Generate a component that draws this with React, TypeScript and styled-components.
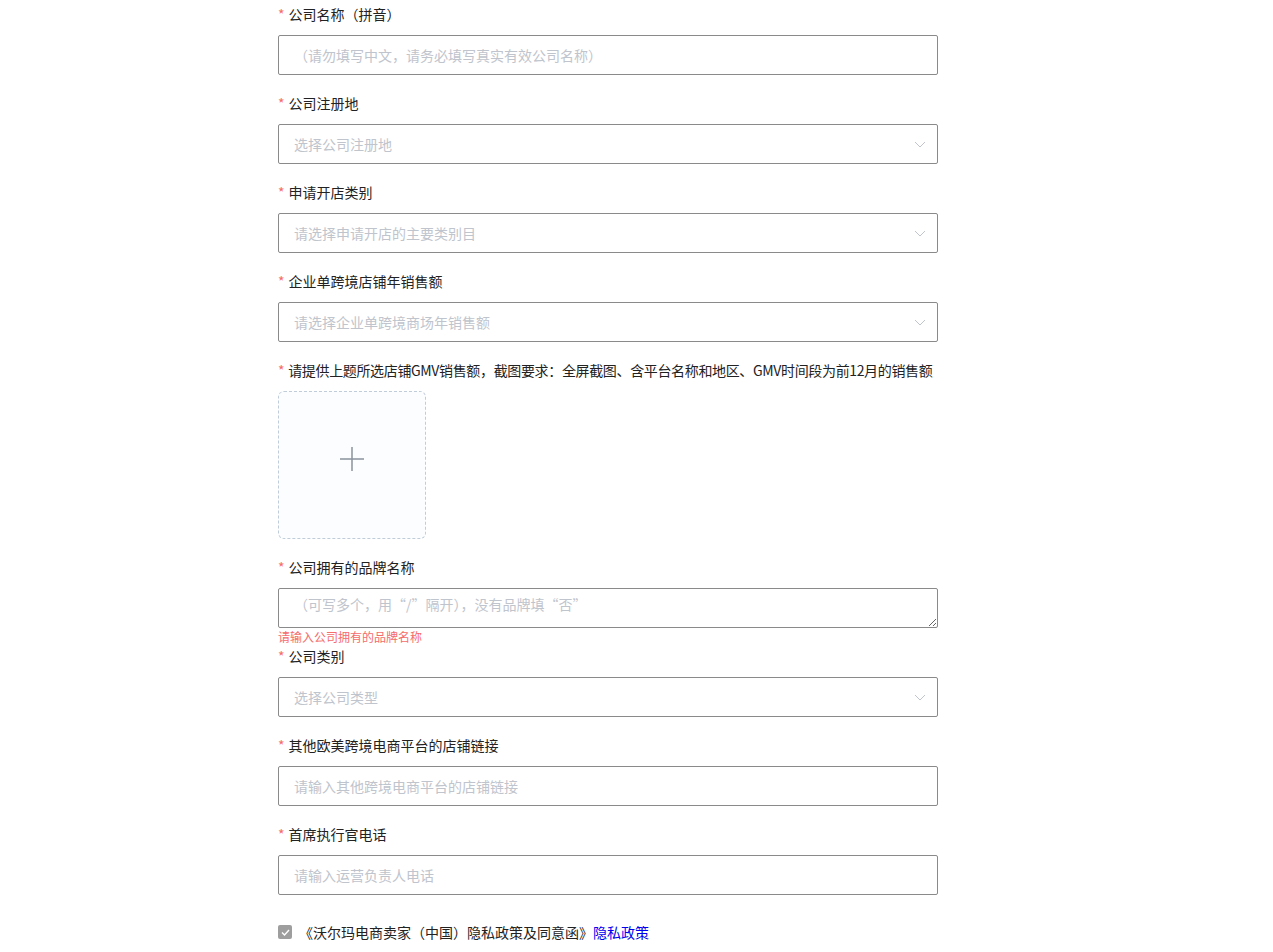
import styled, { createGlobalStyle } from "styled-components";
import { useLayoutEffect, useRef } from "react";

const GlobalStyle = createGlobalStyle`
  body {
    margin: 0;
    background: #fff;
    font-family: "Noto Sans CJK SC", "Noto Sans", sans-serif;
    color: #222;
  }
  * {
    box-sizing: border-box;
  }
`;

type Field = {
  label: string;
  placeholder: string;
  kind: "input" | "select" | "textarea" | "upload";
  error?: string;
};

// the part of the form above the scrolled-to position
const earlier: Field[] = [
  { label: "公司名称（中文）", placeholder: "请输入营业执照上的公司名称", kind: "input" },
  { label: "统一社会信用代码", placeholder: "请输入统一社会信用代码", kind: "input" },
  { label: "公司官网", placeholder: "请输入公司官网地址", kind: "input" },
  { label: "联系人姓名", placeholder: "请输入联系人姓名", kind: "input" },
  { label: "联系人职位", placeholder: "请输入联系人职位", kind: "input" },
  { label: "联系人手机号", placeholder: "请输入联系人手机号", kind: "input" },
  { label: "联系人邮箱", placeholder: "请输入联系人邮箱", kind: "input" },
  { label: "公司地址", placeholder: "请输入公司详细地址", kind: "input" },
  { label: "公司成立时间", placeholder: "请选择公司成立时间", kind: "select" },
  { label: "公司员工人数", placeholder: "请选择公司员工人数", kind: "select" },
  { label: "主营产品", placeholder: "请输入公司主营产品", kind: "input" },
  { label: "公司年销售总额", placeholder: "请选择公司年销售总额", kind: "select" },
  { label: "仓储物流方式", placeholder: "请选择仓储物流方式", kind: "select" },
];

const fields: Field[] = [
  { label: "公司名称（拼音）", placeholder: "（请勿填写中文，请务必填写真实有效公司名称）", kind: "input" },
  { label: "公司注册地", placeholder: "选择公司注册地", kind: "select" },
  { label: "申请开店类别", placeholder: "请选择申请开店的主要类别目", kind: "select" },
  { label: "企业单跨境店铺年销售额", placeholder: "请选择企业单跨境商场年销售额", kind: "select" },
  {
    label: "请提供上题所选店铺GMV销售额，截图要求：全屏截图、含平台名称和地区、GMV时间段为前12月的销售额",
    placeholder: "",
    kind: "upload",
  },
  {
    label: "公司拥有的品牌名称",
    placeholder: "（可写多个，用“/”隔开），没有品牌填“否”",
    kind: "textarea",
    error: "请输入公司拥有的品牌名称",
  },
  { label: "公司类别", placeholder: "选择公司类型", kind: "select" },
  { label: "其他欧美跨境电商平台的店铺链接", placeholder: "请输入其他跨境电商平台的店铺链接", kind: "input" },
  { label: "首席执行官电话", placeholder: "请输入运营负责人电话", kind: "input" },
];

const Chevron = () => (
  <svg width="12" height="7" viewBox="0 0 12 7" fill="none">
    <path d="M1 1l5 5 5-5" stroke="#c0c4cc" strokeWidth="1" />
  </svg>
);

const Plus = () => (
  <svg width="24" height="24" viewBox="0 0 24 24" fill="none">
    <path d="M12 0v24M0 12h24" stroke="#8c939d" strokeWidth="1.5" />
  </svg>
);

const Tick = () => (
  <svg width="9" height="7" viewBox="0 0 9 7" fill="none">
    <path d="M1 3.5l2.5 2.5L8 1" stroke="#fff" strokeWidth="1.4" />
  </svg>
);

const FormField = ({ field, anchor }: { field: Field; anchor?: React.Ref<HTMLDivElement> }) => (
  <Item $hasError={!!field.error} ref={anchor}>
    <Label $compact={field.label.length > 40}>
      <Star>*</Star>
      {field.label}
    </Label>
    {field.kind === "input" && <TextInput placeholder={field.placeholder} />}
    {field.kind === "select" && (
      <SelectBox>
        <span>{field.placeholder}</span>
        <Chevron />
      </SelectBox>
    )}
    {field.kind === "textarea" && <TextArea placeholder={field.placeholder} />}
    {field.kind === "upload" && (
      <Upload>
        <Plus />
      </Upload>
    )}
    {field.error && <ErrorText>{field.error}</ErrorText>}
  </Item>
);

const App = () => {
  const anchor = useRef<HTMLDivElement>(null);

  useLayoutEffect(() => {
    if (anchor.current) {
      const top = anchor.current.getBoundingClientRect().top + window.scrollY;
      window.scrollTo(0, top - 3);
    }
  }, []);

  return (
    <>
      <GlobalStyle />
      <Page>
        <Header>
          <Title>沃尔玛电商卖家入驻申请</Title>
          <Sub>请如实填写以下信息，带 * 为必填项</Sub>
        </Header>
        <Form>
          {earlier.map((f) => (
            <FormField key={f.label} field={f} />
          ))}
          {fields.map((f, i) => (
            <FormField key={f.label} field={f} anchor={i === 0 ? anchor : undefined} />
          ))}
          <Agreement>
            <CheckBox role="checkbox" aria-checked="true">
              <Tick />
            </CheckBox>
            <span>
              《沃尔玛电商卖家（中国）隐私政策及同意函》<PolicyLink href="#">隐私政策</PolicyLink>
            </span>
          </Agreement>
          <Submit type="button">提交申请</Submit>
        </Form>
      </Page>
    </>
  );
};

export default App;

const Page = styled.div`
  padding: 0 0 43px 278px;
`;

const Header = styled.div`
  width: 660px;
  padding: 48px 0 51px;
`;

const Title = styled.h1`
  margin: 0;
  font-size: 24px;
  line-height: 32px;
  font-weight: 600;
  color: #222;
`;

const Sub = styled.p`
  margin: 12px 0 0;
  font-size: 14px;
  line-height: 22px;
  color: #888;
`;

const Form = styled.form`
  width: 660px;
  display: flex;
  flex-direction: column;
`;

const Item = styled.div<{ $hasError: boolean }>`
  display: flex;
  flex-direction: column;
  margin-bottom: ${(p) => (p.$hasError ? "0" : "17px")};
`;

const Label = styled.label<{ $compact: boolean }>`
  display: flex;
  align-items: center;
  font-size: 14px;
  line-height: 22px;
  letter-spacing: ${(p) => (p.$compact ? "-0.35px" : "0")};
  color: #222;
  margin-bottom: 10px;
  white-space: nowrap;
`;

const Star = styled.span`
  color: #f56c6c;
  margin-right: 4px;
`;

const TextInput = styled.input`
  width: 100%;
  height: 40px;
  border: 1px solid #8a8a8a;
  border-radius: 2px;
  padding: 0 15px;
  font-size: 14px;
  font-family: inherit;
  color: #222;
  outline: none;
  &::placeholder {
    color: #c0c4cc;
  }
`;

const SelectBox = styled.div`
  width: 100%;
  height: 40px;
  border: 1px solid #8a8a8a;
  border-radius: 2px;
  padding: 0 11px 0 15px;
  display: flex;
  align-items: center;
  justify-content: space-between;
  font-size: 14px;
  color: #c0c4cc;
`;

const TextArea = styled.textarea`
  display: block;
  width: 100%;
  height: 40px;
  border: 1px solid #8a8a8a;
  border-radius: 2px;
  padding: 5px 15px;
  font-size: 14px;
  line-height: 20px;
  font-family: inherit;
  resize: vertical;
  outline: none;
  &::placeholder {
    color: #c0c4cc;
  }
`;

const Upload = styled.div`
  width: 148px;
  height: 148px;
  border: 1px dashed #c0ccda;
  border-radius: 6px;
  background: #fbfdff;
  display: flex;
  align-items: center;
  justify-content: center;
  padding-bottom: 12px;
`;

const ErrorText = styled.div`
  font-size: 12px;
  line-height: 17px;
  color: #f56c6c;
`;

const Agreement = styled.div`
  display: flex;
  align-items: center;
  gap: 7px;
  margin-top: 9px;
  font-size: 14px;
  line-height: 22px;
  color: #222;
`;

const CheckBox = styled.span`
  width: 14px;
  height: 14px;
  border-radius: 2px;
  background: #9e9e9e;
  display: flex;
  align-items: center;
  justify-content: center;
`;

const PolicyLink = styled.a`
  color: #0000ee;
  text-decoration: none;
`;

const Submit = styled.button`
  margin-top: 30px;
  width: 160px;
  height: 40px;
  border: none;
  border-radius: 4px;
  background: #0071dc;
  color: #fff;
  font-size: 14px;
  font-family: inherit;
`;
